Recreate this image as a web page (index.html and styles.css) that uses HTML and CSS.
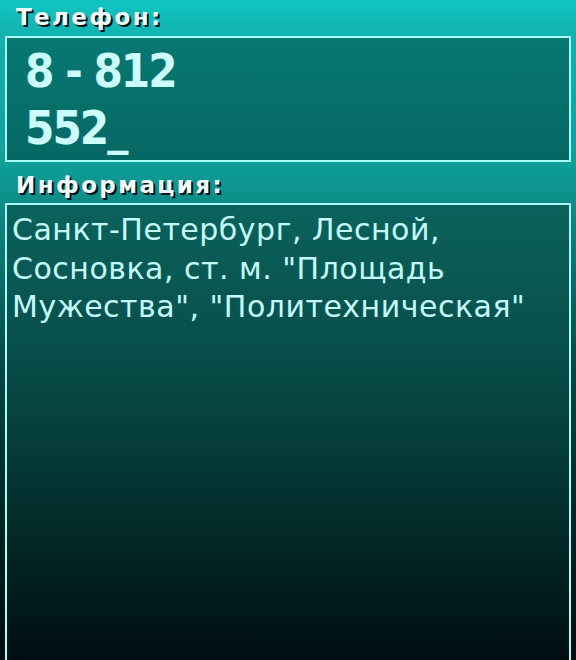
FILE: index.html
```html
<!DOCTYPE html>
<html lang="ru">
<head>
<meta charset="utf-8">
<title>Телефон</title>
<link rel="stylesheet" href="styles.css">
</head>
<body>
<div class="screen">
  <div class="label label-phone">Телефон:</div>
  <div class="box phone-box">
    <div class="phone">8 - 812</div>
    <div class="phone">552_</div>
  </div>
  <div class="label label-info">Информация:</div>
  <div class="box info-box">
    <div class="info">Санкт-Петербург, Лесной,<br>Сосновка, ст. м. "Площадь<br>Мужества", "Политехническая"</div>
  </div>
</div>
</body>
</html>
```
FILE: styles.css
```css
html, body {
  margin: 0;
  padding: 0;
  width: 576px;
  height: 660px;
  overflow: hidden;
}
body {
  background: linear-gradient(to bottom, #10c6c2 0px, #12b2ae 36px, #10a09a 160px, #0e8e88 200px, #084a46 360px, #022826 500px, #000c10 660px);
  font-family: "DejaVu Sans", sans-serif;
}
.screen {
  display: flex;
  flex-direction: column;
  padding: 0 5px;
}
.label {
  color: #f4ffff;
  font-weight: bold;
  font-size: 23px;
  letter-spacing: 2.4px;
  text-shadow: 2px 2px 0 #001018;
  padding-left: 11px;
  box-sizing: border-box;
}
.label-phone {
  height: 36px;
  line-height: 34px;
}
.label-info {
  height: 41px;
  line-height: 46px;
}
.box {
  border: 2px solid #a8fcfc;
  box-sizing: border-box;
}
.phone-box {
  height: 126px;
  background: linear-gradient(to bottom, #087872, #066864);
  padding: 4px 0 0 18px;
}
.phone {
  color: #ccffff;
  font-family: "DejaVu Sans Condensed", "DejaVu Sans", sans-serif;
  font-weight: bold;
  font-size: 47px;
  line-height: 57px;
  letter-spacing: -2px;
}
.info-box {
  height: 480px;
  border-bottom: none;
  background: linear-gradient(to bottom, #0b625c 0px, #084e4a 150px, #04302e 300px, #011a1a 400px, #000c10 460px);
  padding: 6px 0 0 5px;
}
.info {
  color: #c4fafa;
  font-size: 30px;
  line-height: 38.5px;
  letter-spacing: 0.5px;
}
```
